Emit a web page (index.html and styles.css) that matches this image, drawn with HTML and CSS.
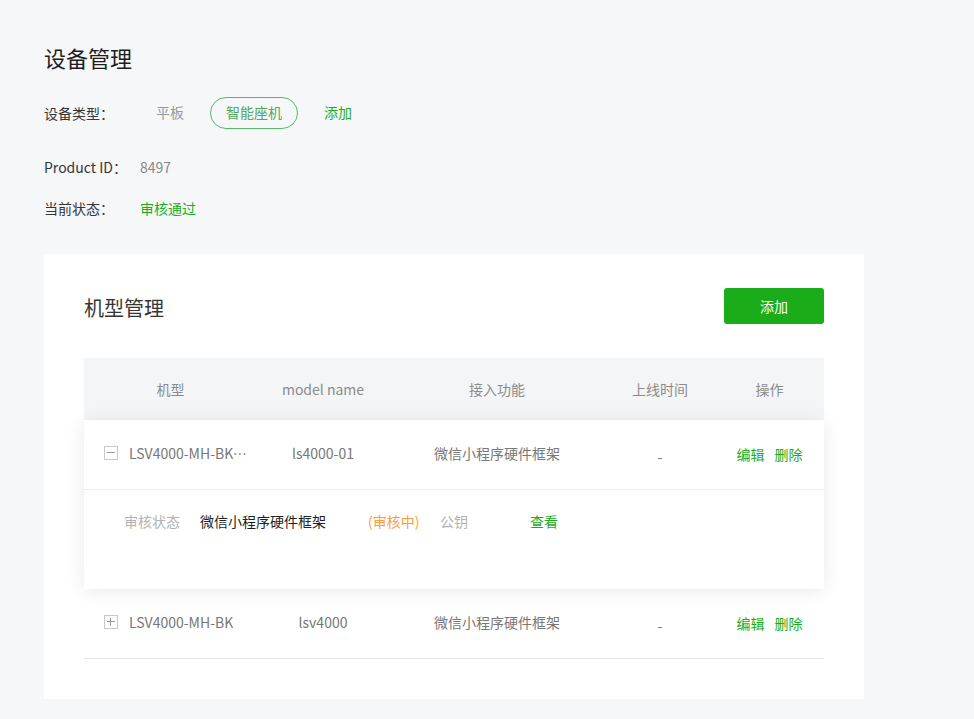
FILE: index.html
```html
<!DOCTYPE html>
<html lang="zh-CN">
<head>
<meta charset="utf-8">
<title>设备管理</title>
<link rel="stylesheet" href="styles.css">
</head>
<body>
<div class="page">
  <h1 class="page-title">设备管理</h1>
  <div class="info-row type-row">
    <span class="info-label">设备类型：</span>
    <div class="type-options">
      <span class="type-opt">平板</span>
      <span class="type-opt active">智能座机</span>
      <span class="type-opt add">添加</span>
    </div>
  </div>
  <div class="info-row pid-row">
    <span class="info-label">Product ID：</span>
    <span class="info-value">8497</span>
  </div>
  <div class="info-row status-row">
    <span class="info-label">当前状态：</span>
    <span class="info-value ok">审核通过</span>
  </div>

  <section class="card">
    <div class="card-head">
      <h2 class="card-title">机型管理</h2>
      <button class="btn-primary">添加</button>
    </div>
    <div class="table">
      <div class="thead">
        <div class="cell c1">机型</div>
        <div class="cell c2">model name</div>
        <div class="cell c3">接入功能</div>
        <div class="cell c4">上线时间</div>
        <div class="cell c5">操作</div>
      </div>
      <div class="group expanded">
        <div class="trow">
          <div class="cell c1 name-cell">
            <span class="toggle minus"></span>
            <span class="name-text">LSV4000-MH-BK-01</span>
          </div>
          <div class="cell c2">ls4000-01</div>
          <div class="cell c3">微信小程序硬件框架</div>
          <div class="cell c4 dash">-</div>
          <div class="cell c5 ops"><a class="op">编辑</a><a class="op">删除</a></div>
        </div>
        <div class="detail">
          <span class="d-label">审核状态</span>
          <span class="d-value">微信小程序硬件框架</span>
          <span class="d-state">(审核中)</span>
          <span class="d-label key">公钥</span>
          <a class="op">查看</a>
        </div>
      </div>
      <div class="group">
        <div class="trow bordered">
          <div class="cell c1 name-cell">
            <span class="toggle plus"></span>
            <span class="name-text">LSV4000-MH-BK</span>
          </div>
          <div class="cell c2">lsv4000</div>
          <div class="cell c3">微信小程序硬件框架</div>
          <div class="cell c4 dash">-</div>
          <div class="cell c5 ops"><a class="op">编辑</a><a class="op">删除</a></div>
        </div>
      </div>
    </div>
  </section>
</div>
</body>
</html>
```
FILE: styles.css
```css
* { box-sizing: border-box; }
html, body { margin: 0; padding: 0; }
body {
  background: #f6f7f9;
  font-family: "Noto Sans CJK SC", "Noto Sans", sans-serif;
  font-size: 14px;
  color: #353535;
  width: 974px;
  height: 719px;
  overflow: hidden;
}
.page { padding: 41px 0 0 44px; }
.page-title {
  margin: 0;
  font-size: 22px;
  font-weight: 400;
  line-height: 33px;
  color: #1d1d1d;
}
.info-row {
  display: flex;
  align-items: center;
  line-height: 20px;
}
.info-label { width: 96px; color: #353535; }
.info-value { color: #888; }
.info-value.ok { color: #1aad19; }
.type-row { margin-top: 23px; height: 32px; }
.pid-row { margin-top: 28px; }
.status-row { margin-top: 21px; }
.type-options { display: flex; gap: 10px; }
.type-opt {
  height: 32px;
  line-height: 29px;
  padding: 0 15px;
  border: 1px solid transparent;
  border-radius: 16px;
  color: #999;
}
.type-opt.active { border-color: #55bb60; color: #52a85a; }
.type-opt.add { color: #1aad19; }

.card {
  margin-top: 36px;
  width: 820px;
  height: 445px;
  background: #fff;
  padding: 0 40px;
}
.card-head {
  display: flex;
  align-items: center;
  justify-content: space-between;
  padding-top: 34px;
  height: 70px;
}
.card-title {
  margin: 0;
  font-size: 20px;
  font-weight: 400;
  line-height: 36px;
  color: #353535;
  padding-top: 4px;
}
.btn-primary {
  width: 100px;
  height: 36px;
  border: 0;
  border-radius: 3px;
  background: #1aad19;
  color: #fff;
  font-family: inherit;
  font-size: 14px;
}
.table { margin-top: 34px; }
.thead, .trow { display: flex; align-items: center; }
.thead {
  height: 62px;
  background: #f4f5f7;
  color: #8c8c8c;
}
.cell { text-align: center; }
.c1 { width: 173px; }
.c2 { width: 132px; }
.c3 { width: 216px; }
.c4 { width: 110px; }
.c5 { width: 109px; }
.trow { height: 70px; color: #777; padding-bottom: 4px; }
.name-cell {
  display: flex;
  align-items: center;
  text-align: left;
  padding-left: 20px;
  padding-right: 10px;
}
.name-text {
  margin-left: 11px;
  white-space: nowrap;
  overflow: hidden;
  text-overflow: ellipsis;
  min-width: 0;
}
.toggle {
  position: relative;
  flex: none;
  width: 14px;
  height: 14px;
  border: 1px solid #c8c8c8;
}
.toggle::before, .plus::after {
  content: "";
  position: absolute;
  background: #9a9a9a;
}
.toggle::before { left: 2px; right: 2px; top: 5px; height: 1px; }
.plus::after { top: 2px; bottom: 2px; left: 5px; width: 1px; }
.dash { padding-top: 6px; }
.ops { display: flex; justify-content: center; gap: 10px; padding-top: 2px; }
.op { color: #1aad19; cursor: pointer; }
.group.expanded {
  position: relative;
  z-index: 1;
  background: #fff;
  box-shadow: 0 2px 18px rgba(0, 0, 0, 0.09);
}
.group.expanded .trow { border-bottom: 1px solid #ececec; }
.detail {
  display: flex;
  align-items: center;
  line-height: 20px;
  padding: 21px 40px 58px;
}
.d-label { color: #b2b2b2; width: 76px; }
.d-label.key { width: 90px; }
.d-value { width: 168px; color: #1f1f1f; }
.d-state { width: 72px; color: #fa9d3b; }
.trow.bordered { border-bottom: 1px solid #e7e7e7; }
```
